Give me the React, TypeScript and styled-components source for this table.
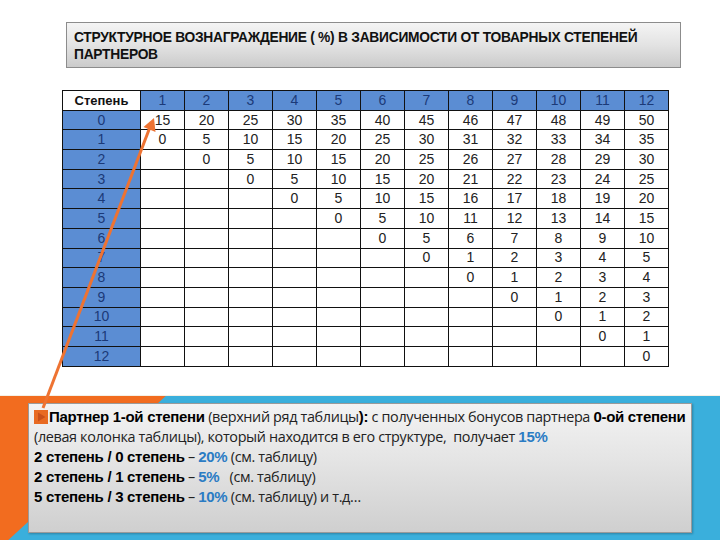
import React from 'react'
import styled, { createGlobalStyle } from 'styled-components'

const GlobalStyle = createGlobalStyle`
  html, body {
    margin: 0;
    padding: 0;
    background: #ffffff;
  }
`

const Page = styled.div`
  position: relative;
  width: 720px;
  height: 540px;
  overflow: hidden;
  background: #ffffff;
  display: flex;
  flex-direction: column;
`

const TitleBox = styled.div`
  margin: 22px 0 0 66px;
  width: 615px;
  height: 46px;
  box-sizing: border-box;
  padding: 5px 0 0 7px;
  border: 1px solid #8c8c8c;
  background: linear-gradient(to bottom, #f4f4f4 0%, #e3e3e3 50%, #cbcbcb 100%);
`

const TitleText = styled.div`
  transform: scaleX(0.89);
  transform-origin: left top;
  white-space: nowrap;
  font-family: 'Liberation Sans', Arial, sans-serif;
  font-weight: bold;
  font-size: 15.5px;
  line-height: 17px;
  letter-spacing: -0.3px;
  color: #111;
  text-transform: uppercase;
`

const Grid = styled.table`
  margin: 22px 0 0 62px;
  width: 606px;
  border-collapse: collapse;
  table-layout: fixed;
  font-family: 'Liberation Sans', Arial, sans-serif;
  font-size: 14px;
  color: #222;
`

const Col = styled.col<{ $wide?: boolean }>`
  width: ${(p) => (p.$wide ? '78px' : '44px')};
`

const Row = styled.tr`
  height: 19.7px;
`

const Cell = styled.td<{ $head?: boolean; $corner?: boolean }>`
  padding: 0;
  border: 1px solid #111;
  text-align: center;
  line-height: 17px;
  background: ${(p) => (p.$corner ? '#ffffff' : p.$head ? '#5b8dd3' : '#ffffff')};
  color: ${(p) => (p.$corner ? '#111' : p.$head ? '#1b3a78' : '#222')};
  font-weight: ${(p) => (p.$corner ? 'bold' : 'normal')};
  font-size: ${(p) => (p.$corner ? '13px' : '14px')};
`

const Band = styled.div`
  position: relative;
  margin-top: 28px;
  flex: 1;
  background: #3aafdc;
  border-top: 1px solid #f4f0e6;
  padding: 7px 0 0 28px;

  &::before {
    content: '';
    position: absolute;
    left: 0;
    top: 0;
    width: 166px;
    height: 152px;
    background: #f26c1f;
    clip-path: polygon(0 0, 100% 0, 0 100%);
  }
`

const TextBox = styled.div`
  position: relative;
  width: 664px;
  height: 130px;
  box-sizing: border-box;
  padding: 3px 0 0 5px;
  border: 1px solid #9a9a9a;
  background: linear-gradient(to bottom, #f3f3f3 0%, #e4e4e4 45%, #cfcfcf 100%);
  box-shadow: 1px 1px 2px rgba(0, 0, 0, 0.25);
  font-family: 'Open Sans', 'DejaVu Sans', sans-serif;
  font-size: 14.4px;
  line-height: 20px;
  letter-spacing: -0.35px;
  color: #222;
`

const Line = styled.div`
  display: flex;
  align-items: center;
  white-space: pre;
`

const Strong = styled.b`
  font-family: 'Liberation Sans', Arial, sans-serif;
  font-weight: bold;
  font-size: 15px;
  letter-spacing: -0.3px;
  color: #000;
`

const Pct = styled(Strong)`
  color: #2b7cc4;
`

const Bullet = styled.span`
  display: inline-flex;
  align-items: center;
  justify-content: center;
  width: 14px;
  height: 14px;
  margin-right: 1px;
  background: #e86a22;
`

const Overlay = styled.svg`
  position: absolute;
  left: 0;
  top: 0;
  pointer-events: none;
`

const head = ['1', '2', '3', '4', '5', '6', '7', '8', '9', '10', '11', '12']

const rows: string[][] = [
  ['15', '20', '25', '30', '35', '40', '45', '46', '47', '48', '49', '50'],
  ['0', '5', '10', '15', '20', '25', '30', '31', '32', '33', '34', '35'],
  ['', '0', '5', '10', '15', '20', '25', '26', '27', '28', '29', '30'],
  ['', '', '0', '5', '10', '15', '20', '21', '22', '23', '24', '25'],
  ['', '', '', '0', '5', '10', '15', '16', '17', '18', '19', '20'],
  ['', '', '', '', '0', '5', '10', '11', '12', '13', '14', '15'],
  ['', '', '', '', '', '0', '5', '6', '7', '8', '9', '10'],
  ['', '', '', '', '', '', '0', '1', '2', '3', '4', '5'],
  ['', '', '', '', '', '', '', '0', '1', '2', '3', '4'],
  ['', '', '', '', '', '', '', '', '0', '1', '2', '3'],
  ['', '', '', '', '', '', '', '', '', '0', '1', '2'],
  ['', '', '', '', '', '', '', '', '', '', '0', '1'],
  ['', '', '', '', '', '', '', '', '', '', '', '0'],
]

export default function App() {
  return (
    <Page>
      <GlobalStyle />
      <TitleBox>
        <TitleText>
          Структурное вознаграждение ( %) в зависимости от товарных степеней
          <br />
          партнеров
        </TitleText>
      </TitleBox>

      <Grid>
        <colgroup>
          <Col $wide />
          {head.map((h) => (
            <Col key={h} />
          ))}
        </colgroup>
        <tbody>
          <Row>
            <Cell $corner>Степень</Cell>
            {head.map((h) => (
              <Cell key={h} $head>
                {h}
              </Cell>
            ))}
          </Row>
          {rows.map((r, i) => (
            <Row key={i}>
              <Cell $head>{i}</Cell>
              {r.map((v, j) => (
                <Cell key={j}>{v}</Cell>
              ))}
            </Row>
          ))}
        </tbody>
      </Grid>

      <Band>
        <TextBox>
          <Line>
            <Bullet>
              <svg width="9" height="10" viewBox="0 0 9 10">
                <path d="M1 0.5 L8.5 5 L1 9.5 Z" fill="#c9501a" />
              </svg>
            </Bullet>
            <Strong>Партнер 1-ой степени</Strong> (верхний ряд таблицы<Strong>):</Strong> с полученных бонусов партнера{' '}
            <Strong>0-ой степени</Strong>
          </Line>
          <Line>
            (левая колонка таблицы), который находится в его структуре,  получает <Pct>15%</Pct>
          </Line>
          <Line>
            <Strong>2 степень / 0 степень</Strong> – <Pct>20%</Pct> (см. таблицу)
          </Line>
          <Line>
            <Strong>2 степень / 1 степень</Strong> – <Pct>5%</Pct>   (см. таблицу)
          </Line>
          <Line>
            <Strong>5 степень / 3 степень</Strong> – <Pct>10%</Pct> (см. таблицу) и т.д…
          </Line>
        </TextBox>
      </Band>

      <Overlay width="720" height="540" viewBox="0 0 720 540">
        <line x1="43" y1="408" x2="150" y2="127" stroke="#ee7332" strokeWidth="3" />
        <path d="M154 118 L155.5 132 L143.5 127 Z" fill="#ee7332" />
      </Overlay>
    </Page>
  )
}
